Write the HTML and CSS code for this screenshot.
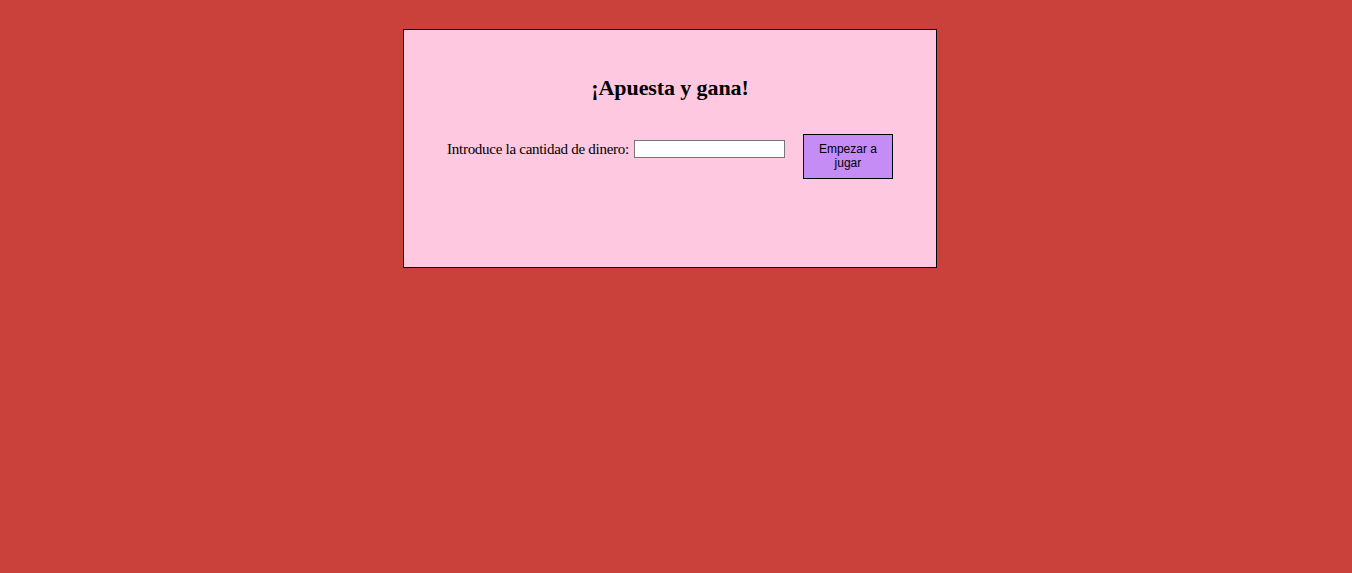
FILE: index.html
```html
<!DOCTYPE html>
<html lang="es">
<head>
<meta charset="utf-8">
<title>Apuesta y gana</title>
<link rel="stylesheet" href="styles.css">
</head>
<body>
<div class="card">
  <h2 class="title">¡Apuesta y gana!</h2>
  <div class="row">
    <div class="field">
      <label class="label" for="dinero">Introduce la cantidad de dinero:</label>
      <input class="input" id="dinero" type="text">
    </div>
    <button class="btn" type="button">Empezar a jugar</button>
  </div>
</div>
</body>
</html>
```

FILE: styles.css
```css
html, body {
  margin: 0;
  padding: 0;
  background: #c9413a;
}
body {
  font-family: "Liberation Serif", "Times New Roman", serif;
  font-size: 16px;
  color: #000;
  padding-top: 29px;
}
.card {
  box-sizing: border-box;
  width: 534px;
  height: 239px;
  margin-left: 403px;
  background: #fdc8e0;
  border: 1px solid #000;
  padding-top: 1px;
}
.title {
  font-size: 22px;
  font-weight: bold;
  text-align: center;
  margin: 44px 0 0 0;
  line-height: 26px;
  letter-spacing: -0.1px;
}
.row {
  display: flex;
  justify-content: center;
  align-items: flex-start;
  gap: 18px;
  margin-top: 33px;
}
.field {
  display: flex;
  align-items: center;
  gap: 5px;
  margin-top: 6px;
  height: 18px;
}
.label {
  font-size: 15px;
  line-height: 18px;
  letter-spacing: -0.28px;
  white-space: nowrap;
}
.input {
  box-sizing: border-box;
  width: 151px;
  height: 18px;
  border: 1px solid #767676;
  background: #fff;
  padding: 0 2px;
  margin: 0;
}
.btn {
  box-sizing: border-box;
  width: 90px;
  height: 45px;
  background: #c58cf5;
  border: 1px solid #000;
  font-family: "Liberation Sans", Arial, sans-serif;
  font-size: 12px;
  line-height: 14px;
  padding: 0 6px 2px;
  color: #000;
}
```
